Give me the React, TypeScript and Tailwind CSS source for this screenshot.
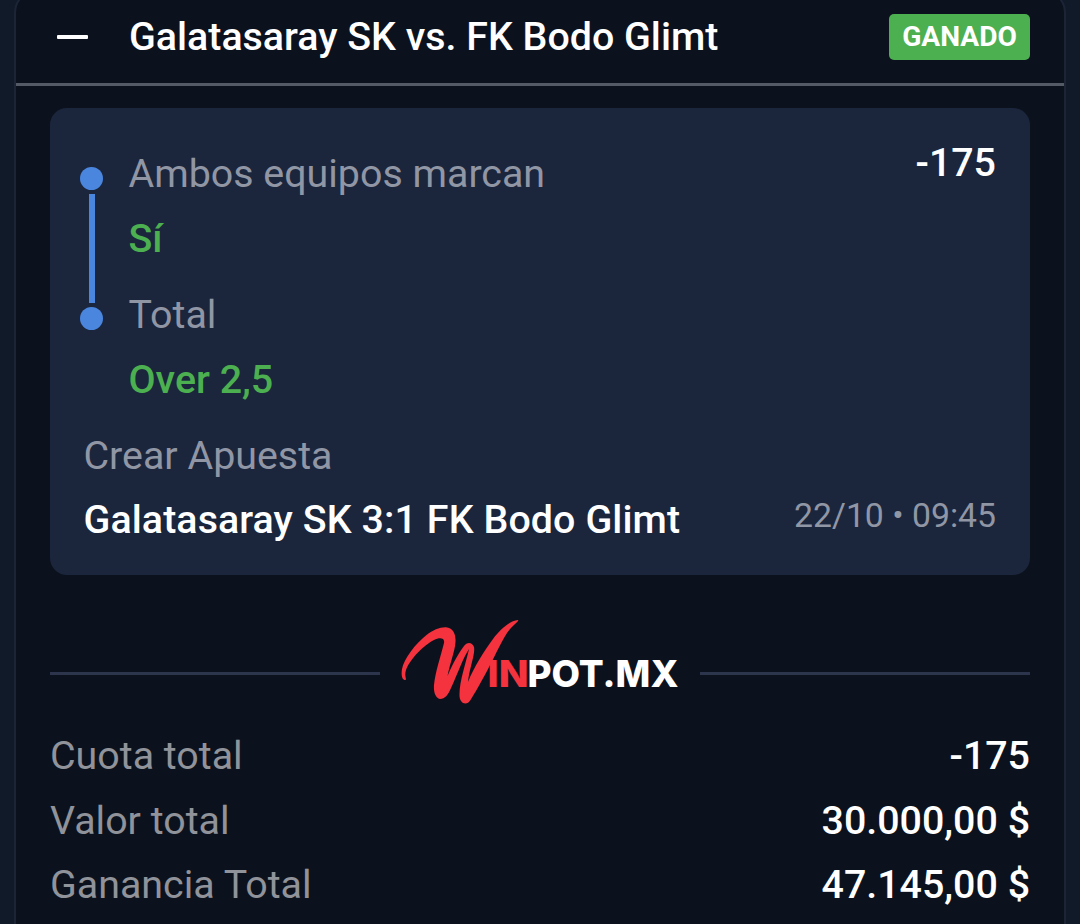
const totals = [
  { label: 'Cuota total', value: '-175' },
  { label: 'Valor total', value: '30.000,00 $' },
  { label: 'Ganancia Total', value: '47.145,00 $' },
];

function Logo() {
  return (
    <svg width="300" height="110" viewBox="0 0 300 110" className="-mx-[11px] shrink-0" role="img" aria-label="Winpot.mx">
      <path
        fill="#f4333f"
        d="M15.5 75 C12 75 11 70 12 64 C14 54 25 39 36.500 30 C43 25 50 22 56 22.300 C63 23 66 29 65.500 37 C65 46 60 58 57.500 71 C63 58 70 46 74 41 C77 37 82 37 84 42 C85.500 49 79 64 78 77 C84 62 94 46 103 34 C110 25 119 16 128 15 C130 15.500 123 20 117 28 C110 39 104 53 97 66 C90 79 85 88 80.500 95 C77 101 70 99 69.500 91 C69 77 76 58 79 44 C73 53 68 68 61 83 C58 90 55 94 50 94 C45 93 43.500 86 44 80 C45 68 51 50 54 38 C55 33 50 32 44 35 C34 40 20 54 16 65 C14 71 17 74 15.500 75 Z"
      />
      <text x="97.500" y="82.200" fill="#f4333f" fontFamily="Inter, sans-serif" fontWeight="800" fontSize="37" textLength="41" lengthAdjust="spacingAndGlyphs">IN</text>
      <text x="137.500" y="82.200" fill="#ffffff" fontFamily="Inter, sans-serif" fontWeight="800" fontSize="37" textLength="151" lengthAdjust="spacingAndGlyphs">POT.MX</text>
    </svg>
  );
}

function Leg({ market, pick }: { market: string; pick: string }) {
  return (
    <div className="leading-[65px]">
      <div className="h-[65px] text-[#9196a5]">{market}</div>
      <div className="h-[65px] font-medium text-[#4caf50]">{pick}</div>
    </div>
  );
}

export default function App() {
  return (
    <div className="h-[924px] w-[1080px] overflow-hidden bg-[#101a28] px-3.5 font-[Roboto,sans-serif] text-[39.375px]">
      <div className="-mt-[11px] h-[980px] rounded-3xl border-2 border-[#1b2536] bg-[#0c121d] pt-[9px]">
        <div className="flex h-[86px] items-center border-b-[3px] border-[#555b66] pr-[34px] pl-[41px] pb-[9px]">
          <div className="h-1 w-[31px] rounded-[1px] bg-white" />
          <h1 className="ml-[41px] flex-1 font-medium whitespace-nowrap text-white">Galatasaray SK vs. FK Bodo Glimt</h1>
          <span className="flex h-[46px] w-[141px] items-center justify-center rounded-[5px] bg-[#4caf50] text-[28.125px] font-bold text-white">GANADO</span>
        </div>

        <div className="px-[34px] pt-[22px]">
          <section className="h-[467px] rounded-[17px] bg-[#1b263d] px-[34px] pt-[33px]">
            <div className="flex">
              <div className="-ml-1 flex w-[23px] flex-col items-center pt-[26px]">
                <div className="size-[23px] shrink-0 rounded-full bg-[#4b86de]" />
                <div className="my-[4px] h-[109px] w-1.5 bg-[#4b86de]" />
                <div className="size-[23px] shrink-0 rounded-full bg-[#4b86de]" />
              </div>
              <div className="ml-[25.5px] flex flex-1 flex-col gap-[11px]">
                <Leg market="Ambos equipos marcan" pick="Sí" />
                <Leg market="Total" pick="Over 2,5" />
              </div>
              <div className="-mt-[11px] font-medium leading-[65px] text-white">-175</div>
            </div>
            <div className="mt-[11px] -ml-[0.5px] leading-[65px] text-[#9196a5]">Crear Apuesta</div>
            <div className="-mt-px flex justify-between leading-[65px]">
              <div className="-ml-[0.5px] font-medium tracking-[0.09px] text-white">Galatasaray SK 3:1 FK Bodo Glimt</div>
              <div className="-mt-1 text-[33.75px] text-[#9196a5]">22/10 • 09:45</div>
            </div>
          </section>

          <div className="mt-[30px] flex h-[110px] items-center">
            <div className="mt-[27px] h-[3px] flex-1 bg-[#2c354b]" />
            <div className="px-[21px]"><Logo /></div>
            <div className="mt-[27px] h-[3px] flex-1 bg-[#2c354b]" />
          </div>

          <dl className="mt-2 leading-[65px]">
            {totals.map(({ label, value }) => (
              <div key={label} className="flex h-[64.5px] justify-between">
                <dt className="text-[#90939a]">{label}</dt>
                <dd className="font-medium text-white">{value}</dd>
              </div>
            ))}
          </dl>
        </div>
      </div>
    </div>
  );
}
